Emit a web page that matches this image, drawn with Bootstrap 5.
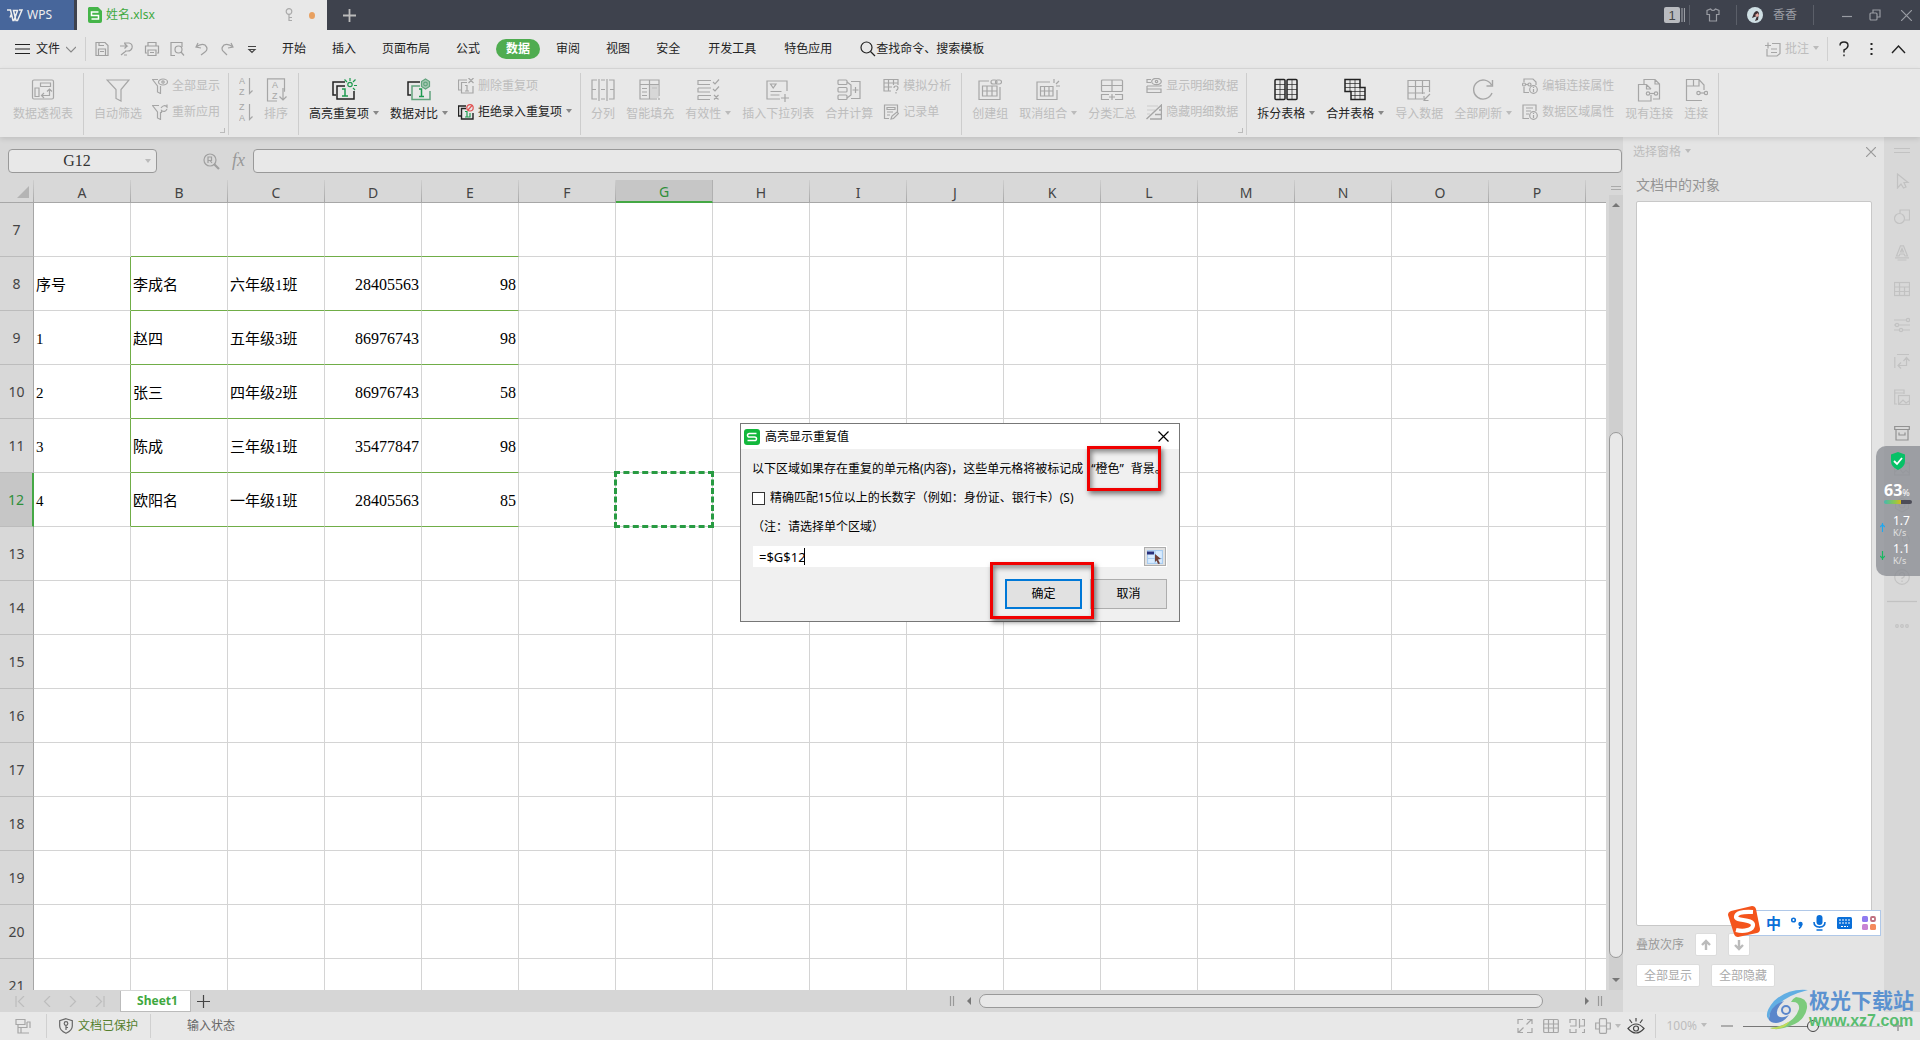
<!DOCTYPE html>
<html lang="zh-CN">
<head>
<meta charset="utf-8">
<title>姓名.xlsx - WPS</title>
<meta name="viewport" content="width=device-width, initial-scale=1">
<link href="https://cdn.jsdelivr.net/npm/bootstrap@5.3.0/dist/css/bootstrap.min.css" rel="stylesheet">
<style>
body{font-family:"Noto Sans","Noto Sans CJK SC",sans-serif;font-size:12px;line-height:18px;color:#222;background:#d8d8d8;overflow:hidden}
svg{display:block;flex:none;fill:none;stroke:currentColor;stroke-width:1.2}
svg text{stroke:none;fill:currentColor;font-family:"Liberation Sans",sans-serif}
button{padding:0;border:0;background:none;color:inherit;white-space:nowrap;flex:none}
.titlebar,.menubar,.ribbon,.status,.pane,.side,.fbar,.sheettabs,.vscroll{flex:none}
.titlebar{height:30px;background:#3e424d;color:#999ca3}
.brand-wps{width:74px;background:#47669b;color:#eee;padding-left:7px}
.filetab{width:250px;margin-left:3px;background:#e8e8e8;color:#3fa83f;padding:0 12px 0 11px}
.dirty{width:6px;height:7px;border-radius:50%;background:#e8a060}
.vline{width:1px;height:20px;background:#5b5f69;flex:none}
.menubar{height:38px;background:#e8e8e8;padding-left:15px}
.quick{gap:9px;color:#a0a0a0;border-left:1px solid #cfcfcf;margin-left:9px;padding-left:8px;height:24px}
.tabs-main{gap:26px;margin-left:22px}
.tabs-main button{height:20px}
.tabs-main .wide{margin-left:2px}
.tabs-main .now{background:#4fac50;color:#fff;font-weight:700;border-radius:10px;padding:0 10px;margin:0 -10px}
.drop::after{content:"";display:inline-block;border:3px solid transparent;border-top:4px solid #888;border-bottom:0;margin-left:4px;vertical-align:3px}
.off .drop::after,.drop.off::after{border-top-color:#bbb}
.ribbon{height:69px;background:#e8e8e8;border-top:1px solid #d3d3d3;padding:4px 0 0 3px;position:relative;z-index:2;box-shadow:0 2px 5px #0000001c}
.rgroup{height:62px;gap:11px;padding:0 10px;border-right:1px solid #cdcdcd;align-items:flex-start;position:relative}
.rgroup.tight{padding-right:8px}
.rgroup.corner::after{content:"";position:absolute;right:3px;bottom:2px;width:5px;height:5px;border:solid #bbb;border-width:0 1px 1px 0}
.big{display:flex;flex-direction:column;align-items:center;padding-top:5px;gap:3px}
.stack{display:flex;flex-direction:column;margin-left:-1px}
.stack button{height:26px;display:flex;align-items:center;gap:4px}
.off{color:#bdbdbd}.off svg{color:#a6a6a6}
.fbar{height:43px;padding:12px 1px 0 8px;gap:12px}
.namebox,.formula{height:24px;border:1px solid #999;border-radius:4px;background:#e8e8e8}
.namebox{width:149px}
.namebox input,.formula{outline:0;color:#333}
.namebox input{width:136px;border:0;background:none;text-align:center;font:16px/22px "Liberation Serif",serif;padding:0}
.namebox .arrow{border:3px solid transparent;border-top:4px solid #bbb;border-bottom:0}
.viewport{overflow:hidden;flex:1 1 0;min-width:0;background:#d8d8d8}
.sheet{border-collapse:separate;border-spacing:0;table-layout:fixed;width:1683px;line-height:18px}
.sheet th{font-weight:400;font-size:14px;text-align:center;color:#444;background:#d8d8d8;padding:0}
.sheet thead th{height:23px;border-bottom:1px solid #a6a6a6;border-right:1px solid;border-image:linear-gradient(#d0d0d0,#a6a6a6) 1;position:relative;padding-top:3px}
.sheet tbody th{border-right:1px solid #a6a6a6;border-bottom:1px solid #bcbcbc}
.sheet td{height:54px;border-right:1px solid #d4d4d4;border-bottom:1px solid #d4d4d4;background:#fff;color:#000;padding:3px 2px 0;font:15px/18px "Liberation Serif","Noto Sans CJK SC",serif;white-space:nowrap;vertical-align:middle}
.sheet td.numcell{font-size:16px;text-align:right;padding-right:2px}
.sheet td.gb{border-bottom-color:#70ad47}
.sheet td.gr{border-right-color:#70ad47}
.sheet thead th.on{background:#c6c6c6;color:#2f8f3a;border-image:none;border-color:#b0b0b0;border-bottom:2px solid #45a845}
.sheet tbody th.on{background:#c6c6c6;color:#2f8f3a;border-right:2px solid #45a845}
.sheet td.picked{position:relative}
.picked::after{content:"";position:absolute;inset:-2px;border:3px dashed #289b42}
.corner-tri{position:absolute;right:4px;bottom:4px;border:6px solid #b4b4b4;border-top-color:transparent;border-left-color:transparent}
.vscroll{width:14px;margin-left:3px;color:#777}
.vtrack{background:#cfcfcf;padding:8px 0}
.thumb{border:1px solid #999;background:#e8e8e8;border-radius:7px}
.tri{border:4px solid transparent;width:0;height:0}
.tri.up{border-top:0;border-bottom-color:#777}.tri.down{border-bottom:0;border-top-color:#777}
.tri.lft{border-left:0;border-right-color:#777}.tri.rgt{border-right:0;border-left-color:#777}
.sheettabs{height:22px;background:#d6d6d6;color:#bdbdbd}
.sheetnav{width:120px;gap:18px;padding-left:15px}
.sheetname{width:71px;height:21px;background:#fff;color:#3fa83f;font-weight:700;border:solid #bbb;border-width:0 1px 1px;padding-left:4px}
.hscroll{width:654px;margin-right:20px;gap:8px}
.hthumb{width:564px;height:14px}
.pane{width:261px;background:#e4e4e4;padding:6px 12px 25px 13px;color:#9a9a9a}
.pane h2{font-size:14px;line-height:20px;margin:14px 0 6px;font-weight:400;color:#949494}
.objlist{border:1px solid #c8c8c8;border-radius:2px;background:#fff;margin-bottom:7px}
.flatbtn{background:#fff;border:1px solid #dcdcdc;border-radius:2px;height:23px;color:#aaa}
.side{width:36px;background:#d8d8d8;color:#c2c2c2;padding-top:10px}
.side button{height:36px;display:flex;align-items:center}
.status{height:28px;background:#e8e8e8;color:#666}
.sdiv{width:1px;height:24px;background:#d0d0d0}
.status .rt{gap:10px;padding-right:17px;color:#a6a6a6}
.zoomer{width:140px;height:12px;appearance:none;background:linear-gradient(90deg,#777 50%,#bbb 50%) center/100% 1px no-repeat;margin:0}
.zoomer::-webkit-slider-thumb{appearance:none;width:12px;height:12px;border-radius:50%;border:1px solid #444;background:#e8e8e8}
.monitor{position:absolute;right:0;top:446px;width:44px;height:130px;background:#888b91bf;border-radius:10px 0 0 10px;z-index:5;color:#fff;padding-top:6px}
.monitor .speed{height:28px;line-height:14px;padding-left:17px;font-size:12px;position:relative}
.monitor .speed small{display:block;font-size:9px;line-height:9px;color:#e0e0e0}
.monitor .speed svg{position:absolute;left:4px;top:9px}
.meter{width:28px;height:4px;border-radius:2px;background:linear-gradient(90deg,#45b8b0,#8fc94a 40%,#d8b820 60%,#4d4d58 61%)}
.ime{position:absolute;right:39px;top:910px;width:144px;height:26px;background:#fff;border:1px solid #b0c8e8;z-index:5;color:#0a6fd8;padding:0 4px 0 28px}
.ime .sogou{position:absolute;left:-10px;top:-5px}
.wmark{position:absolute;right:6px;top:988px;z-index:6;color:#5c92d0;gap:1px;pointer-events:none}
.wmark b{display:block;font-size:21px;line-height:24px}
.wmark i{display:block;font:700 16px/18px "Liberation Sans",sans-serif;color:#58bd70}
.dlg{position:absolute;left:740px;top:423px;width:440px;height:199px;border:1px solid #777;background:#f0f0f0;color:#000;z-index:10}
.dlg header{height:25px;background:#fff;padding:0 10px 0 3px;gap:5px}
.dlg .inner{padding:11px 12px 0 11px}
.dlg .line1{white-space:nowrap;overflow:hidden;width:409px}
.dlg input[type=checkbox]{appearance:none;width:13px;height:13px;border:1px solid #333;background:#fff;margin:0}
.refrow{height:21px;background:#fff;margin-left:1px;padding:0 1px 0 6px}
.refrow input{border:0;outline:0;font-size:13px;padding:0;width:46px;border-right:1px solid #000;height:17px;color:#000}
.pick{width:22px;height:19px;border:1px solid #adadad;background:#e1e1e1}
.dbtn{width:77px;height:30px;border:1px solid #adadad;background:#e1e1e1;color:#000}
.dbtn.ok{border:2px solid #0078d7}
.redbox{position:absolute;border:3px solid #f00000;box-shadow:2px 3px 5px #00000080,inset 2px 3px 5px #00000070;z-index:11;pointer-events:none}
.redbox.word{left:346px;top:22px;width:74px;height:45px}
.redbox.okay{left:249px;top:138px;width:104px;height:57px}
</style>
<script src="https://cdn.jsdelivr.net/npm/bootstrap@5.3.0/dist/js/bootstrap.bundle.min.js"></script>
</head>
<body class="vh-100 d-flex flex-column position-relative">

<!-- title bar -->
<div class="titlebar d-flex">
  <button class="brand-wps d-flex align-items-center gap-1"><svg width="16" height="13" viewBox="0 0 16 13"><path stroke-width="1.500" d="M0 1h3.500L6 11.500h1L10.500 1.500h-4L9 11.500h1.500L15 1h-3M4.500 5L3 8.500"/></svg><span>WPS</span></button>
  <div class="filetab d-flex align-items-center">
    <svg width="14" height="16" viewBox="0 0 14 16"><path d="M1 0h9l4 4v10q0 2-2 2H2q-2 0-2-2V1z" fill="#45b549" stroke="none"/><path d="M10.500 5h-7v3.500h7V12h-7" stroke="#fff" stroke-width="1.500"/></svg>
    <span class="ms-1">姓名.xlsx</span>
    <svg class="ms-auto me-3" width="8" height="14" viewBox="0 0 8 14" color="#aaa"><circle cx="4" cy="3.500" r="2.800"/><path d="M4 6v7M4 9.500h3M4 12.500h3"/></svg>
    <span class="dirty"></span>
  </div>
  <button class="px-3" aria-label="新建"><svg width="13" height="13" viewBox="0 0 13 13" color="#bbb"><path d="M6.500 0v13M0 6.500h13" stroke-width="1.800"/></svg></button>
  <div class="d-flex align-items-center ms-auto pe-2">
    <svg width="21" height="16" viewBox="0 0 21 16"><rect width="16" height="16" rx="2" fill="#b9bbc0" stroke="none"/><path d="M18 1v14M20.500 1v14"/><text x="4.500" y="13" font-size="13" style="fill:#444">1</text></svg>
    <span class="vline ms-1 me-3"></span>
    <svg width="14" height="14" viewBox="0 0 14 14"><path d="M4.500 1Q7 4 9.500 1L13 2.500v4h-2.500V13h-7V6.500H1v-4z"/></svg>
    <span class="vline mx-3"></span>
    <svg style="margin-left:-6px" width="16" height="16" viewBox="0 0 16 16"><circle cx="8" cy="8" r="8" fill="#cfdfe4" stroke="none"/><path d="M7 6q3-4 5 0l-1 7-3 1 2-5-5 2z" fill="#3c3034" stroke="none"/><path d="M8 8l3-2 1 3-2 1z" fill="#e8a8a0" stroke="none"/></svg>
    <span style="margin-left:10px">香香</span>
    <span class="vline ms-3"></span>
    <button class="ms-4 ps-1 me-3" aria-label="最小化"><svg width="11" height="12" viewBox="0 0 11 12"><path d="M0 7.500h10"/></svg></button>
    <button class="me-3" aria-label="还原"><svg width="12" height="12" viewBox="0 0 12 12"><rect x="1" y="4" width="7" height="7" rx="1"/><path d="M4 4V1h7v7H8"/></svg></button>
    <button class="ms-1" aria-label="关闭"><svg width="11" height="11" viewBox="0 0 11 11"><path d="M0 0l11 11M11 0L0 11"/></svg></button>
  </div>
</div>

<!-- menu bar -->
<nav class="menubar d-flex align-items-center">
  <button class="d-flex align-items-center" style="gap:6px"><svg width="15" height="10" viewBox="0 0 15 10"><path d="M0 .5h15M0 5h15M0 9.500h15"/></svg>文件<svg width="10" height="7" viewBox="0 0 10 7" color="#888"><path d="M0 1l5 5 5-5"/></svg></button>
  <div class="quick d-flex align-items-center">
    <svg width="16" height="16" viewBox="0 0 16 16"><path d="M2 14.500V1.500h9l3 3v10zM5 1.500v3h5M4.500 14V8h7v6M6 10.500h4"/></svg>
    <svg width="16" height="16" viewBox="0 0 16 16"><path d="M5 2h5q4 1 3 5-1 3-4 3H6M1 5h7L5.500 2.500M8 5L5.500 7.500M2 14l5-4M5 14h3"/></svg>
    <svg width="16" height="16" viewBox="0 0 16 16"><path d="M4 5V1.500h8V5M3 12H1.500V5h13v7H13M4 9h8v5.500H4zM6 11.500h4"/></svg>
    <svg width="16" height="16" viewBox="0 0 16 16"><path d="M6 14.500H2v-13h11V6"/><circle cx="9.500" cy="8.500" r="3.500"/><path d="M12 11l3 3.500"/></svg>
    <svg width="16" height="16" viewBox="0 0 16 16"><path d="M4 2L2 6l5 1M2 6q5-4 9-2 4 4 0 7l-4 3"/></svg>
    <svg width="16" height="16" viewBox="0 0 16 16"><path d="M12 2l2 4-5 1M14 6Q9 2 5 4q-4 4 0 7l3 3"/></svg>
    <svg width="16" height="16" viewBox="0 0 16 16" color="#444"><path d="M4 5.500h8M5 8.500l3 3 3-3z"/></svg>
  </div>
  <div class="tabs-main d-flex align-items-center">
    <button>开始</button><button>插入</button><button>页面布局</button><button>公式</button><button class="now">数据</button><button>审阅</button><button>视图</button><button>安全</button><button class="wide">开发工具</button><button class="wide">特色应用</button>
    <button class="wide d-flex align-items-center"><svg width="16" height="16" viewBox="0 0 16 16"><circle cx="6.500" cy="6.500" r="5.500"/><path d="M10.500 10.500L15 15"/></svg>查找命令、搜索模板</button>
  </div>
  <div class="d-flex align-items-center ms-auto" style="padding-right:14px">
    <button class="d-flex align-items-center gap-1 off"><svg width="16" height="15" viewBox="0 0 16 15"><path d="M7 1.500h8v10l-3 2.500H2V7M0 3.500h6M3 .5v6M6 7h6M6 10.500h6"/></svg><span class="drop">批注</span></button>
    <span class="sdiv ms-2" style="margin-right:10px"></span>
    <button aria-label="帮助"><svg width="12" height="16" viewBox="0 0 12 16"><path d="M2 4.500Q2 1 6 1t4 3.500Q10 7 6 9v2.500M6 13.500v1.800" stroke-width="1.400"/></svg></button>
    <svg style="margin:0 18px 0 20px" width="3" height="14" viewBox="0 0 3 14"><path d="M1.500 1v2M1.500 6v2M1.500 11v2" stroke-width="2"/></svg>
    <button aria-label="收起"><svg width="15" height="9" viewBox="0 0 15 9"><path d="M1 8l6.500-7L14 8" stroke-width="1.400"/></svg></button>
  </div>
</nav>

<!-- ribbon -->
<div class="ribbon d-flex">
  <div class="rgroup d-flex off">
    <button class="big"><svg width="24" height="24" viewBox="0 0 24 24"><rect x="1.500" y="2" width="21" height="19" rx="1.500"/><path d="M9.500 5h10v3.500h-10zM4 10h4v8.500H4zM11 17.500h7.500V11M13 15l-2.500 2.500L13 20M16 13.500l2.500-2.500 2.500 2.500"/></svg><span>数据透视表</span></button>
  </div>
  <div class="rgroup tight corner d-flex off">
    <button class="big"><svg width="24" height="24" viewBox="0 0 24 24"><path d="M1 2h22l-8 9.500V23l-5-2.500v-9z"/></svg><span>自动筛选</span></button>
    <div class="stack">
      <button><svg width="16" height="16" viewBox="0 0 16 16"><path d="M6 1.500H.5L5.500 8v6l3 1.500V8"/><ellipse cx="11" cy="4" rx="4.500" ry="3"/><circle cx="11" cy="4" r="1.200"/></svg>全部显示</button>
      <button><svg width="16" height="16" viewBox="0 0 16 16"><path d="M7 1.500H.5L5.500 8v6l3 1.500V8M9 4q3-4 6-1V.5M15 5q-2 4-5.500 1.500V9"/></svg>重新应用</button>
    </div>
  </div>
  <div class="rgroup d-flex off">
    <div class="stack ms-0">
      <button aria-label="升序"><svg width="14" height="22" viewBox="0 0 14 22"><text x="0" y="9" font-size="9">A</text><text x="0" y="20" font-size="9">Z</text><path d="M10.500 3v15.500l3-3"/></svg></button>
      <button aria-label="降序"><svg width="14" height="22" viewBox="0 0 14 22"><text x="0" y="9" font-size="9">Z</text><text x="0" y="20" font-size="9">A</text><path d="M10.500 3v15.500l3-3"/></svg></button>
    </div>
    <button class="big"><svg width="24" height="24" viewBox="0 0 24 24"><path d="M13 23H3.500V.8h17v13"/><text x="8" y="10" font-size="9">A</text><text x="8" y="21" font-size="9">Z</text><path d="M19 10v12M15.500 18.500L19 22l3.500-3.500"/></svg><span>排序</span></button>
  </div>
  <div class="rgroup tight d-flex">
    <button class="big"><svg width="26" height="24" viewBox="0 0 26 24"><path d="M5 17H2V4h12" stroke-width="1.500"/><path d="M14 8H6v13h17v-8" stroke-width="1.500"/><g color="#1f9a50" stroke="#1f9a50"><path d="M11 11h3v7M11 18h6" stroke-width="1.500"/><circle cx="19" cy="6.500" r="2.200"/><path d="M19 0v3M13.500 1.500l2.500 2.500M24.500 1.500L22 4M23 7.500h3M22 10l2 2"/></g></svg><span class="drop">高亮重复项</span></button>
    <button class="big"><svg width="24" height="24" viewBox="0 0 24 24"><path d="M4 17H1V4h12" stroke-width="1.500"/><path d="M13 8H5v13.500h18V13" stroke="#62a37d" stroke-width="1.500"/><path d="M12 11h2.500v7.500M12 18.500h5" stroke="#1f9a50" stroke-width="1.500"/><path d="M18.500 1l4 2.500v5l-4 2.500-4-2.500v-5z" stroke="#62a37d" fill="#a5c9b2"/><circle cx="18.500" cy="6" r="1.800" stroke="#62a37d"/></svg><span class="drop">数据对比</span></button>
    <div class="stack">
      <button class="off"><svg width="16" height="16" viewBox="0 0 16 16"><path d="M3 12H.5V2H9M9 4.500H3.500V15H15V8M7 7.500h2V13M7 13h4M10.500 0l5 5M15.500 0l-5 5"/></svg>删除重复项</button>
      <button><svg width="16" height="16" viewBox="0 0 16 16"><path d="M3 12H.5V2H8M8 4.500H3.500V15H15V9" stroke-width="1.400"/><path d="M7 7.500h2V13M7 13h5V9" stroke="#1f9a50"/><circle cx="12" cy="3.800" r="3.200" stroke="#e05050"/><path d="M10 6l4-4.500" stroke="#e05050"/></svg><span class="drop">拒绝录入重复项</span></button>
    </div>
  </div>
  <div class="rgroup d-flex off">
    <button class="big"><svg width="24" height="24" viewBox="0 0 24 24"><path d="M6 2H1v19h5M18 2h5v19h-5M1 11.500h4M19 11.500h4M10 11.500h4M8 1v22M16 1v22M10 2h4M10 21h4"/></svg><span>分列</span></button>
    <button class="big"><svg width="24" height="24" viewBox="0 0 24 24"><path d="M19 21H2V2h19v16M2 6.500h19M11.500 2v19M4 10.500h5M4 14h5M4 17.500h5M14 10h5M21 20v2"/><rect x="12" y="7" width="9" height="13" fill="#ccc" stroke="none" opacity=".6"/></svg><span>智能填充</span></button>
    <button class="big"><svg width="24" height="24" viewBox="0 0 24 24"><path d="M15 2.500H2v4h12M2 10h13M14 14H2v-4M2 17.500h13M14 21.500H2v-4M17 4l2 2 4-4.500M17 11l2 2 4-4.500M18 17l4.500 4.500M22.500 17L18 21.500"/></svg><span class="drop">有效性</span></button>
    <button class="big"><svg width="24" height="24" viewBox="0 0 24 24"><path d="M14 21H1V3h20v10M4.500 6H10L7.200 10zM4.500 13.500h11M4.500 17h9M19 16v8M15 20h8"/></svg><span>插入下拉列表</span></button>
    <button class="big"><svg width="24" height="24" viewBox="0 0 24 24"><rect x="1" y="2" width="9" height="4.500" rx="1"/><rect x="1" y="9.500" width="9" height="4.500" rx="1"/><rect x="1" y="17" width="9" height="4.500" rx="1"/><path d="M14 3.500h9v17h-9M10 4l4 3v10l-4 3M15.500 12h6M18.500 9v6"/></svg><span>合并计算</span></button>
    <div class="stack">
      <button><svg width="16" height="16" viewBox="0 0 16 16"><path d="M8 13H1V1.500h14V7M1 5h14M1 9h8M5.500 1.500V13M10.500 1.500V7M11 10q0-2 2-2t2 2-2 2.500M13 14v1.500"/></svg>模拟分析</button>
      <button><svg width="16" height="16" viewBox="0 0 16 16"><path d="M6 14.500H1.500V1h13v7M4 3.500h8v2H4zM4 8h6M4 11h3M8 15l1-3 5-4 1.500 1.500-5 5z"/></svg>记录单</button>
    </div>
  </div>
  <div class="rgroup tight corner d-flex off">
    <button class="big"><svg width="24" height="24" viewBox="0 0 24 24"><path d="M11 3H1v18.500h21V9M4.500 8h14.500v10H4.500zM4.500 13h14.500M9 8v10M14 8v10"/><rect x="13" y="2" width="6" height="4" rx="2"/><rect x="17.500" y="2" width="6" height="4" rx="2"/></svg><span>创建组</span></button>
    <button class="big"><svg width="24" height="24" viewBox="0 0 24 24"><path d="M14 4H1v17.500h20V12M4.500 8.500H17V18H4.500zM4.500 13H17M8.500 8.500V18M13 8.500V18M18 1v4M23 3l-3 3M20 8h4"/></svg><span class="drop">取消组合</span></button>
    <button class="big"><svg width="24" height="24" viewBox="0 0 24 24"><rect x="1.500" y="2" width="21" height="11.500" rx="1"/><path d="M1.500 7.500h21M12 2v11.500M9 16.500H1.500v5H9M15 16.500h7.500v5H15M9 19h6M12 16v6"/></svg><span>分类汇总</span></button>
    <div class="stack">
      <button><svg width="16" height="16" viewBox="0 0 16 16"><path d="M5 1.500H1v3h4M1 8h14v-1M1 8v3h14v3.500H1v-3"/><ellipse cx="10.500" cy="3.500" rx="4.800" ry="3.200"/><circle cx="10.500" cy="3.500" r="1.200"/></svg>显示明细数据</button>
      <button><svg width="16" height="16" viewBox="0 0 16 16"><path d="M.5 15L15.500 1v14H4M13 6h2M9 10.500h6" stroke-width="1.400"/><path d="M1 2h11M1 6h8M1 10h3" opacity=".4"/></svg>隐藏明细数据</button>
    </div>
  </div>
  <div class="rgroup d-flex">
    <button class="big"><svg width="24" height="24" viewBox="0 0 24 24"><rect x="1" y="1.500" width="10" height="20" rx="1" stroke-width="1.500"/><rect x="13" y="1.500" width="10" height="20" rx="1" stroke-width="1.500"/><path d="M1 6.500h10M1 11.500h10M1 16.500h10M6 1v20M13 6.500h10M13 11.500h10M13 16.500h10M18 1v20" stroke-width=".7"/></svg><span class="drop">拆分表格</span></button>
    <button class="big"><svg width="24" height="24" viewBox="0 0 24 24"><path d="M2 1.500h15v8h5v12H8v-8H2z" stroke-width="1.500"/><path d="M2 5.500h15M2 9.500h15M8 13.500h14M8 17.500h14M7 1v12M12 1v20M17 9v12" stroke-width=".7"/></svg><span class="drop">合并表格</span></button>
    <button class="big off"><svg width="24" height="24" viewBox="0 0 24 24"><path d="M16 21H1V2.500h21.500V14M1 8.500h21M1 15h17M8.500 3v18M15.500 3v13M23 16l-6 6M17 18v4.500h4.500"/></svg><span>导入数据</span></button>
    <button class="big off"><svg width="24" height="24" viewBox="0 0 24 24"><path d="M20.500 7A9.500 9.500 0 1 0 21 15M21.500 2v6h-6" stroke-width="1.400"/></svg><span class="drop">全部刷新</span></button>
    <div class="stack off">
      <button><svg width="16" height="16" viewBox="0 0 16 16"><path d="M2 4V1h9l3 3v3M2 9v5.500h5"/><circle cx="2" cy="6.500" r="1.500"/><circle cx="7.500" cy="6.500" r="1.500"/><path d="M3.500 6.500H6"/><circle cx="11.500" cy="11.500" r="3.800"/><path d="M11.500 11v3M11.500 9v1"/></svg>编辑连接属性</button>
      <button><svg width="16" height="16" viewBox="0 0 16 16"><path d="M7 14.500H1V1h13v6M4 4h7M4 7h5M4 10h3"/><circle cx="11.500" cy="11.500" r="3.800"/><path d="M11.500 11v3M11.500 9v1"/></svg>数据区域属性</button>
    </div>
    <button class="big off"><svg width="24" height="24" viewBox="0 0 24 24"><path d="M7 6V1.500h11l4.500 4.500v15H16M18 1.500V6h4.500M14 17v6H1.500V6.500h8L14 11M9.500 6.500V11H14"/><circle cx="11" cy="15.500" r="1.700"/><circle cx="19" cy="15.500" r="1.700"/><path d="M12.500 15.500h5"/></svg><span>现有连接</span></button>
    <button class="big off"><svg width="24" height="24" viewBox="0 0 24 24"><path d="M18 22.500H2.500v-21H15l5 5.500v5M15 1.500V8H2.500M9.500 2v6"/><circle cx="14.500" cy="15" r="1.700"/><circle cx="22" cy="15" r="1.700"/><path d="M16 15h4.500"/></svg><span>连接</span></button>
  </div>
</div>

<!-- work area -->
<main class="d-flex flex-grow-1" style="min-height:0">
  <section class="d-flex flex-column flex-grow-1" style="min-width:0">
    <div class="fbar d-flex">
      <div class="namebox d-flex align-items-center"><input aria-label="名称框" value="G12"><span class="arrow"></span></div>
      <svg style="margin:4px 0 0 34px" width="17" height="17" viewBox="0 0 17 17" color="#a0a0a0"><circle cx="7" cy="7" r="6"/><path d="M11 11l5 5" stroke-width="2.200"/><path d="M5 10V4h3.500v3.500H5M7 7.500L9 10"/></svg>
      <svg style="margin-top:2px" width="17" height="20" viewBox="0 0 17 20" color="#999"><text x="0" y="15" font-size="18" font-style="italic" style="font-family:'Liberation Serif',serif">fx</text></svg>
      <input class="formula flex-grow-1" style="margin-left:-8px" aria-label="编辑栏">
    </div>
    <div class="d-flex flex-grow-1" style="min-height:0">
      <div class="viewport">
        <table class="sheet"><colgroup><col style="width:34px"></colgroup><thead><tr id="heads"></tr></thead><tbody id="cells"></tbody></table>
      </div>
      <div class="vscroll d-flex flex-column">
        <svg width="14" height="15" viewBox="0 0 14 15" color="#aaa"><path d="M2 6.500h10M2 9.500h10"/></svg>
        <div class="vtrack flex-grow-1 d-flex flex-column align-items-center">
          <span class="tri up"></span>
          <div class="thumb w-100" style="height:526px;margin:auto 0 20px"></div>
          <span class="tri down"></span>
        </div>
      </div>
    </div>
    <div class="sheettabs d-flex align-items-center">
      <div class="sheetnav d-flex">
        <svg width="10" height="11" viewBox="0 0 10 11"><path d="M1 0v11M9 0L3.500 5.500 9 11"/></svg>
        <svg width="8" height="11" viewBox="0 0 8 11"><path d="M7 0L1.500 5.500 7 11"/></svg>
        <svg width="8" height="11" viewBox="0 0 8 11"><path d="M1 0l5.500 5.500L1 11"/></svg>
        <svg width="10" height="11" viewBox="0 0 10 11"><path d="M1 0l5.500 5.500L1 11M9 0v11"/></svg>
      </div>
      <button class="sheetname">Sheet1</button>
      <button style="margin-left:6px" aria-label="新建工作表"><svg width="13" height="13" viewBox="0 0 13 13" color="#444"><path d="M6.500 0v13M0 6.500h13"/></svg></button>
      <div class="hscroll d-flex align-items-center ms-auto">
        <svg width="6" height="10" viewBox="0 0 6 10" color="#999"><path d="M1.500 0v10M4.500 0v10"/></svg>
        <span class="tri lft ms-1"></span><div class="thumb hthumb"></div><span class="tri rgt ms-auto"></span>
        <svg width="6" height="10" viewBox="0 0 6 10" color="#999"><path d="M1.500 0v10M4.500 0v10"/></svg>
      </div>
    </div>
  </section>

  <aside class="pane d-flex flex-column">
    <div class="d-flex justify-content-between align-items-center"><button class="drop off" style="margin-left:-3px">选择窗格</button><button style="margin-right:-4px" aria-label="关闭窗格"><svg width="10" height="10" viewBox="0 0 10 10"><path d="M0 0l10 10M10 0L0 10"/></svg></button></div>
    <h2>文档中的对象</h2>
    <div class="objlist flex-grow-1"></div>
    <div class="d-flex align-items-center mb-2"><span style="margin-right:11px">叠放次序</span>
      <button class="flatbtn px-1" aria-label="上移"><svg width="12" height="12" viewBox="0 0 12 12" color="#bbb"><path d="M6 11V2M2 6l4-4 4 4" stroke-width="2.400"/></svg></button>
      <button class="flatbtn px-1" style="margin-left:11px" aria-label="下移"><svg width="12" height="12" viewBox="0 0 12 12" color="#bbb"><path d="M6 1v9M2 6l4 4 4-4" stroke-width="2.400"/></svg></button></div>
    <div class="d-flex"><button class="flatbtn" style="padding:0 7px">全部显示</button><button class="flatbtn" style="padding:0 7px;margin-left:11px">全部隐藏</button></div>
  </aside>

  <div class="side d-flex flex-column align-items-center">
    <svg width="16" height="8" viewBox="0 0 16 8"><path d="M0 1.500h16M0 5.500h16"/></svg>
    <button aria-label="选择" style="margin-top:8px"><svg width="16" height="16" viewBox="0 0 16 16"><path d="M3.500 1v14l3.500-4 2.500 4 2.500-1-2-4.500h4z"/></svg></button>
    <button aria-label="形状"><svg width="16" height="16" viewBox="0 0 16 16"><circle cx="5.500" cy="9.500" r="5"/><path d="M6 4V1h9.500v10H11"/></svg></button>
    <button aria-label="艺术字"><svg width="16" height="16" viewBox="0 0 16 16"><path d="M2.500 11L6.500.8h3L13.500 11h-2.500l-1-2H6l-1 2zM6.500 7L8 3.500 9.500 7zM1 12.800h14M3.500 15h9"/></svg></button>
    <button aria-label="表格"><svg width="16" height="16" viewBox="0 0 16 16"><rect x=".5" y="1.500" width="15" height="13"/><path d="M0 6h16M0 10.500h16M5.500 2v12M10.500 6v8"/></svg></button>
    <button aria-label="设置"><svg width="16" height="16" viewBox="0 0 16 16"><path d="M0 3h12M5 8h11M0 8h1M0 13h5M9 13h7"/><circle cx="14" cy="3" r="1.600"/><circle cx="3" cy="8" r="1.600"/><circle cx="7" cy="13" r="1.600"/></svg></button>
    <button aria-label="透视"><svg width="16" height="16" viewBox="0 0 16 16"><path d="M3 1.500h12M.8 4v11M4 12.500h8.500V5M7 9.500l-3 3 3 3M9.500 8l3-3.500 3 3.500"/></svg></button>
    <button aria-label="图片库"><svg width="16" height="16" viewBox="0 0 16 16"><path d="M3 15H.7V1H10v4M.7 4H10"/><rect x="4.500" y="6.500" width="11" height="9"/><path d="M5 15l4-4 3 3 3-2"/></svg></button>
    <button aria-label="归档"><svg width="16" height="16" viewBox="0 0 16 16" color="#929292"><path d="M.7 1.500h14.600v3H.7zM2 4.500V15h12V4.500M5 7.500V10h6V7.500"/></svg></button>
    <button aria-label="图片"><svg width="16" height="16" viewBox="0 0 16 16"><rect x=".7" y="2" width="14.600" height="12"/><path d="M1 11l4-4 4 5 3-3 3 3"/></svg></button>
    <button aria-label="安全"><svg width="16" height="16" viewBox="0 0 16 16"><path d="M8 1l6.500 3.500v7L8 15l-6.500-3.500v-7z"/><circle cx="8" cy="8" r="3"/></svg></button>
    <button aria-label="历史"><svg width="16" height="16" viewBox="0 0 16 16"><path d="M3 3a7 7 0 1 1 1 10M8.500 4v4l3 3M2 7v6M0 11l2 2 2-2"/></svg></button>
    <button aria-label="问号"><svg width="16" height="16" viewBox="0 0 16 16"><circle cx="8" cy="8" r="7.300"/><path d="M5.500 6q0-2.500 2.500-2.500T10.500 6 8 9v1M8 11.500V13"/></svg></button>
    <svg width="30" height="12" viewBox="0 0 30 12"><path d="M0 6.500h30"/></svg>
    <svg class="mt-3" width="16" height="6" viewBox="0 0 16 6"><circle cx="3" cy="3" r="1.300"/><circle cx="8" cy="3" r="1.300"/><circle cx="13" cy="3" r="1.300"/></svg>
  </div>
</main>

<!-- status bar -->
<footer class="status d-flex align-items-center">
  <svg style="margin-left:15px" width="16" height="16" viewBox="0 0 16 16" color="#a6a6a6"><path d="M1 1.500h9v5H1zM3 6.500v3h9V4M3 9.500V15h11M12 4h3v6M6 10v5"/></svg>
  <span class="sdiv" style="margin:0 12px 0 15px"></span>
  <svg width="14" height="16" viewBox="0 0 14 16"><path d="M7 .7l6.300 2V8q0 4.500-6.300 7.300Q.7 12.500.7 8V2.700z"/><circle cx="7" cy="5.500" r="1.800"/><path d="M7 7.300V12M7 9.500h2"/></svg>
  <span style="color:#557f2e;margin-left:5px">文档已保护</span>
  <span class="sdiv" style="margin:0 36px 0 12px"></span><span>输入状态</span>
  <div class="rt d-flex align-items-center ms-auto">
    <svg width="16" height="16" viewBox="0 0 16 16"><path d="M1 6V1.500h5M10 1.500h5V6M15 10v4.500h-5M6 14.500H1V10M9.500 6.500l5-5M6.500 9.500l-5 5"/></svg>
    <svg width="16" height="16" viewBox="0 0 16 16"><rect x=".7" y="1.500" width="14.600" height="13" rx="1"/><path d="M0 6h16M0 10h16M5.500 2v12M10.500 2v12"/></svg>
    <svg width="16" height="16" viewBox="0 0 16 16"><path d="M1 5V1.500h6V8H1M10.500 1v9M10.500 8h5V1.500H13M1 11v3.500h6V11M13 14.500h2.500V11"/></svg>
    <span class="d-flex align-items-center drop off"><svg width="16" height="16" viewBox="0 0 16 16"><rect x="4.500" y=".7" width="7" height="14.600" rx="1"/><path d="M4.500 5H.7v6h3.800M11.500 5h3.800v6h-3.800M4 8h8"/></svg></span>
    <svg style="margin-left:-4px" width="18" height="16" viewBox="0 0 18 16" color="#444"><path d="M1 10.500q8-9 16 0-8 9-16 0z"/><circle cx="9" cy="10.500" r="2.500"/><path d="M9 0v3.500M2.500 1.500L5 5M15.500 1.500L13 5"/></svg>
    <span class="sdiv"></span>
    <span class="drop off me-1">100%</span>
    <svg width="12" height="12" viewBox="0 0 12 12"><path d="M0 6h12" stroke-width="1.800"/></svg>
    <input class="zoomer" type="range" min="0" max="100" value="50" aria-label="缩放">
    <svg width="10" height="12" viewBox="0 0 10 12"><path d="M0 6h10M5 1v10" stroke-width="1.800"/></svg>
  </div>
</footer>

<!-- network monitor -->
<div class="monitor">
  <svg style="margin-left:15px" width="14" height="18" viewBox="0 0 14 18"><path d="M7 0l7 2.500V9q0 6-7 9-7-3-7-9V2.500z" fill="#06c167" stroke="none"/><path d="M3 9l3 3 5-6" stroke="#fff" stroke-width="1.800"/></svg>
  <div class="d-flex align-items-baseline" style="margin:11px 0 0 8px"><b style="font-size:16px;line-height:18px">63</b><span style="font-size:9px;line-height:12px">%</span></div>
  <div class="meter" style="margin:1px 0 10px 8px"></div>
  <div class="speed">1.7<small>K/s</small><svg width="5" height="9" viewBox="0 0 5 9" color="#1fa8f0"><path d="M2.500 0v9M0 4l2.500-2.500L5 4"/></svg></div>
  <div class="speed">1.1<small>K/s</small><svg width="5" height="9" viewBox="0 0 5 9" color="#18b860"><path d="M2.500 0v9M0 5l2.500 2.500L5 5"/></svg></div>
</div>

<!-- input method bar -->
<div class="ime d-flex align-items-center justify-content-between">
  <svg class="sogou" width="32" height="31" viewBox="0 0 32 31"><path d="M3 5L24 0q3 0 4 3l4 20q0 3-3 4L10 31q-3 0-4-3L0 9q0-3 3-4z" fill="#f4541c" stroke="none"/><path d="M25 6Q8 5 8 11c0 4 17 2 17 8 0 5-9 7-17 5" stroke="#fff" stroke-width="4.200"/></svg>
  <b style="font-size:15px">中</b>
  <svg width="12" height="12" viewBox="0 0 12 12"><circle cx="2.500" cy="3" r="1.800" stroke-width="1.600"/><circle cx="9.500" cy="7" r="1.600" fill="currentColor"/><path d="M10.500 7q0 3-2.500 4.500" stroke-width="1.600"/></svg>
  <svg width="13" height="16" viewBox="0 0 13 16"><rect x="3.500" y="0" width="6" height="10" rx="3" fill="currentColor" stroke="none"/><path d="M1 7q0 5 5.500 5T12 7M6.500 12v1M3.500 15h6" stroke-width="1.600"/></svg>
  <svg width="15" height="12" viewBox="0 0 15 12"><rect width="15" height="12" rx="1.500" fill="currentColor" stroke="none"/><path d="M2 3h11M2 6h11M4 9.500h7" stroke="#fff" stroke-dasharray="2 1"/></svg>
  <svg width="14" height="14" viewBox="0 0 14 14"><rect width="6" height="6" rx="1.500" fill="#8f7af0" stroke="none"/><rect x="9" y="1" width="4" height="4" rx="1" stroke="#c07080" stroke-width="1.800"/><rect y="8" width="6" height="6" rx="1.500" fill="#c784d4" stroke="none"/><rect x="8" y="8" width="6" height="6" rx="1.500" fill="#f58a5c" stroke="none"/></svg>
</div>

<!-- site mark -->
<div class="wmark d-flex">
  <svg width="42" height="42" viewBox="0 0 42 42"><g stroke="none"><path d="M42 2Q22 0 8 13-3 26 3 32q-1-8 10-16Q22 7 42 2z" fill="#62aee3"/><path d="M3 32Q3 18 18 13q-10 9-6 15 4 3 11-1-6 8-13 8-5 0-7-3z" fill="#5a86cb"/><path d="M30 9q12 1 11 11-2 13-17 18-13 5-20 2 24-3 29-19 1-8-8-7 1-3 5-5z" fill="#7ccb7c"/><path d="M4 40q10 0 20-7-4 6-9 7-6 2-11 0z" fill="#c4da58"/></g><circle cx="20" cy="22" r="4" stroke="#5a86cb" stroke-width="2"/></svg>
  <div><b>极光下载站</b><i>www.xz7.com</i></div>
</div>

<!-- dialog -->
<div class="dlg" role="dialog" aria-labelledby="dt">
  <header class="d-flex align-items-center">
    <svg width="16" height="16" viewBox="0 0 16 16"><rect width="16" height="16" rx="3" fill="#12b83c" stroke="none"/><path d="M12.500 4.500h-7q-2 0-2 1.800T5.500 8h5q2 0 2 1.800t-2 1.700h-7" stroke="#fff" stroke-width="1.500"/></svg>
    <span id="dt">高亮显示重复值</span>
    <button class="ms-auto" aria-label="关闭"><svg width="11" height="11" viewBox="0 0 11 11"><path d="M.5.5l10 10M10.500.5l-10 10"/></svg></button>
  </header>
  <div class="inner">
    <div class="line1">以下区域如果存在重复的单元格(内容)，这些单元格将被标记成<span class="ps-2">“橙色”</span><span style="padding-left:7px">背景。</span></div>
    <label class="d-flex align-items-center mt-2" style="gap:5px;padding:3px 0 0"><input type="checkbox">精确匹配15位以上的长数字（例如：身份证、银行卡）(S)</label>
    <div style="margin:11px 0 10px">（注：请选择单个区域）</div>
    <div class="refrow d-flex align-items-center justify-content-between"><input aria-label="区域" value="=$G$12"><button class="pick d-flex align-items-center justify-content-center" aria-label="选取区域"><svg width="16" height="14" viewBox="0 0 16 14"><rect x=".5" y=".5" width="15" height="13" fill="#d8ecff" stroke="#a8ccf0"/><path d="M0 1.500h7v3H0z" fill="#28307c" stroke="none"/><path d="M0 8.500h16M8 1v12" stroke="#a8ccf0"/><path d="M8 4l6 5-3 .5 2 4-2 .5-1.500-3.500L8 12z" fill="#704038" stroke="none"/></svg></button></div>
    <div class="d-flex justify-content-end gap-2" style="margin-top:12px"><button class="dbtn ok">确定</button><button class="dbtn">取消</button></div>
  </div>
  <div class="redbox word"></div><div class="redbox okay"></div>
</div>

<script>
const letters = [...'ABCDEFGHIJKLMNOPQ'];
const data = {
  8:['序号','李成名','六年级1班','28405563','98'],
  9:['1','赵四','五年级3班','86976743','98'],
  10:['2','张三','四年级2班','86976743','58'],
  11:['3','陈成','三年级1班','35477847','98'],
  12:['4','欧阳名','一年级1班','28405563','85']
};
document.getElementById('heads').innerHTML =
  '<th style="border-right-color:#a6a6a6"><span class="corner-tri"></span></th>' +
  letters.map(l => `<th class="${l === 'G' ? 'on' : ''}">${l === 'Q' ? '' : l}</th>`).join('');
let rows = '';
for (let r = 7; r <= 21; r++) {
  rows += `<tr><th class="${r === 12 ? 'on' : ''}">${r}</th>`;
  letters.forEach((l, c) => {
    const cls = [];
    if (c >= 1 && c <= 4 && r >= 7 && r <= 12) cls.push('gb');
    if (c === 0 && r >= 8 && r <= 12) cls.push('gr');
    if (c === 3 || c === 4) cls.push('numcell');
    if (l === 'G' && r === 12) cls.push('picked');
    rows += `<td class="${cls.join(' ')}">${(data[r] && data[r][c]) || ''}</td>`;
  });
  rows += '</tr>';
}
document.getElementById('cells').innerHTML = rows;
</script>
</body>
</html>
